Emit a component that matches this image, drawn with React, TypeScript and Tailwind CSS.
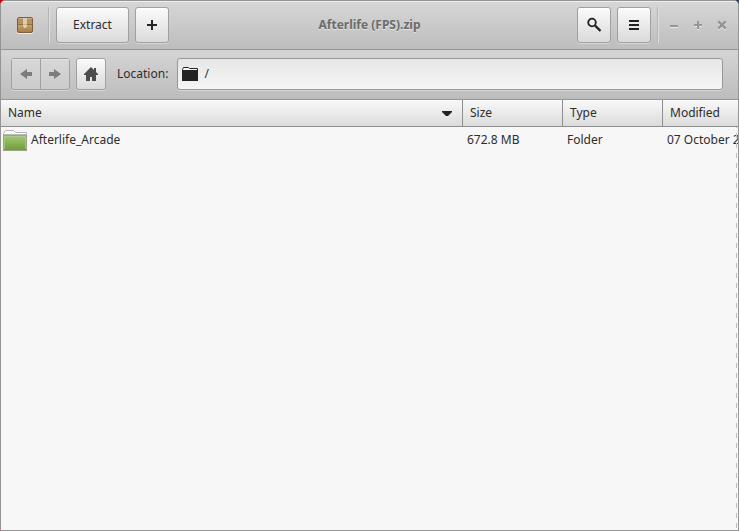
import type { ReactNode } from "react";

const raised =
  "flex shrink-0 items-center justify-center rounded-[3px] border border-[#a0a0a0] bg-linear-to-b from-[#fbfbfb] to-[#dadada] text-[#2d2d2d] shadow-[inset_0_1px_0_#ffffff,0_1px_0_#d6d6d6]";

function WindowButton({ label, children }: { label: string; children: ReactNode }) {
  return (
    <button type="button" aria-label={label} className="flex h-6 w-6 items-center justify-center">
      <svg width="12" height="12" viewBox="0 0 12 12" fill="none" strokeWidth="2">
        <g stroke="#e9e9e9" transform="translate(0 1)">{children}</g>
        <g stroke="#969696">{children}</g>
      </svg>
    </button>
  );
}

function Divider() {
  return <div className="h-9 w-0.5 border-l border-r border-l-[#b5b5b5] border-r-[#e0e0e0]" />;
}

function PackageIcon() {
  return (
    <svg className="ml-3" width="16" height="17" viewBox="0 0 16 17">
      <defs>
        <linearGradient id="box" x1="0" y1="0" x2="0" y2="1">
          <stop offset="0" stopColor="#b58f60" />
          <stop offset="0.42" stopColor="#b8915f" />
          <stop offset="0.5" stopColor="#c8a06c" />
          <stop offset="1" stopColor="#a57a48" />
        </linearGradient>
      </defs>
      <rect x="0" y="1" width="16" height="16" rx="2" fill="#ececec" />
      <rect x="0.5" y="0.5" width="15" height="15" rx="1.5" fill="url(#box)" stroke="#80603c" />
      <path d="M1 7.5h14" stroke="#93703f" />
      <path d="M1.5 1.5h13" stroke="#cdb08a" />
      <path d="M6 1h4v9H9v1H7v-1H6z" fill="#e0cba8" />
      <path d="M6 7.5h4" stroke="#cdb288" />
    </svg>
  );
}

function FolderIcon() {
  return (
    <svg className="shrink-0" width="24" height="21" viewBox="0 0 24 21">
      <defs>
        <linearGradient id="folder" x1="0" y1="0" x2="0" y2="1">
          <stop offset="0" stopColor="#a5c878" />
          <stop offset="1" stopColor="#6f9c36" />
        </linearGradient>
      </defs>
      <path d="M0.5 20V3.5L2.5 0.5h8l2 2h11V20z" fill="#fff" stroke="#b3b3b3" />
      <rect x="0.5" y="5.5" width="23" height="15" fill="url(#folder)" stroke="#9aa38e" />
      <path d="M1 4.5h22" stroke="#b8b8b8" />
      <path d="M1.5 19V6.5h21V19" fill="none" stroke="#b4d28e" strokeOpacity="0.6" />
    </svg>
  );
}

const head =
  "h-[27px] border-b border-b-[#8e8e8e] pl-[7px] text-left align-middle font-normal whitespace-nowrap";

const cell = "pt-[5px] pl-1 align-top whitespace-nowrap";

export default function App() {
  return (
    <div className="bg-linear-to-r from-[#d40000] to-[#33415e] font-['Noto_Sans',sans-serif] text-xs leading-4 text-[#2d2d2d]">
      <main className="flex min-h-screen flex-col overflow-hidden rounded-t-[5px] border border-[#959595] bg-[#f7f7f7]">
        <header className="flex h-[49px] shrink-0 items-center border-b border-[#959595] bg-linear-to-b from-[#d7d7d7] to-[#bdbdbd] px-1 shadow-[inset_0_1px_0_#ededed]">
          <div className="flex flex-1 items-center">
            <PackageIcon />
            <div className="mr-1.5 ml-[15px]">
              <Divider />
            </div>
            <button type="button" className={`${raised} mr-1.5 h-9 w-[73px]`}>
              Extract
            </button>
            <button type="button" aria-label="Add files" className={`${raised} h-9 w-[34px]`}>
              <svg width="10" height="10" viewBox="0 0 10 10">
                <path d="M0 5h10M5 0v10" stroke="#222" strokeWidth="2" />
              </svg>
            </button>
          </div>
          <h1 className="font-bold text-[#6b6b6b] [text-shadow:0_1px_#e4e4e4]">Afterlife (FPS).zip</h1>
          <div className="flex flex-1 items-center justify-end">
            <button type="button" aria-label="Search" className={`${raised} mr-1.5 h-9 w-[34px]`}>
              <svg width="16" height="16" viewBox="0 0 16 16" fill="none" stroke="#222">
                <circle cx="6" cy="5.5" r="3.8" strokeWidth="1.8" />
                <path d="M9 8.5l5.5 5.5" strokeWidth="2.4" />
              </svg>
            </button>
            <button type="button" aria-label="Menu" className={`${raised} mr-1.5 h-9 w-[34px]`}>
              <svg width="10" height="10" viewBox="0 0 10 10">
                <path d="M0 1h10M0 5h10M0 9h10" stroke="#222" strokeWidth="2" />
              </svg>
            </button>
            <Divider />
            <div className="ml-[3px] flex">
              <WindowButton label="Minimize">
                <path d="M2 7h8" />
              </WindowButton>
              <WindowButton label="Maximize">
                <path d="M2 6h8M6 2v8" />
              </WindowButton>
              <WindowButton label="Close">
                <path d="M2.3 2.3l7.4 7.4M9.7 2.3l-7.4 7.4" strokeWidth="2.6" />
              </WindowButton>
            </div>
          </div>
        </header>

        <nav className="flex h-[50px] shrink-0 items-start border-b border-[#959595] bg-linear-to-b from-[#d5d5d5] to-[#bcbcbc] pt-2 pr-[15px] pl-2.5">
          <div className="flex h-8 rounded-[3px] border border-[#a0a0a0] bg-linear-to-b from-[#d8d8d8] to-[#cbcbcb] shadow-[0_1px_0_#d6d6d6]">
            <button type="button" disabled aria-label="Back" className="flex w-7 items-center justify-center shadow-[inset_0_1px_0_#e0e0e0]">
              <svg width="12" height="10" viewBox="0 0 12 10" fill="#7d7d7d">
                <path d="M0 5l7-5v3h5v4H7v3z" />
              </svg>
            </button>
            <button type="button" disabled aria-label="Forward" className="flex w-[29px] items-center justify-center border-l border-[#a0a0a0] shadow-[inset_0_1px_0_#e0e0e0]">
              <svg width="12" height="10" viewBox="0 0 12 10" fill="#7d7d7d">
                <path d="M12 5L5 0v3H0v4h5v3z" />
              </svg>
            </button>
          </div>
          <button type="button" aria-label="Home" className={`${raised} ml-1.5 h-8 w-[30px]`}>
            <svg width="14" height="14" viewBox="0 0 14 14" fill="#4c4c4c">
              <path d="M7 0l3 3V1h2v4l2 2v1h-2v6H8v-4H6v4H2V8H0V7z" />
            </svg>
          </button>
          <label htmlFor="location" className="mr-[9px] ml-[11px] leading-8 whitespace-nowrap">
            Location:
          </label>
          <div className="flex h-8 min-w-0 flex-1 items-center gap-1.5 rounded-[3px] border border-[#989898] bg-linear-to-b from-[#e6e6e6] to-[#f6f6f6] px-1 shadow-[0_1px_0_#d6d6d6]">
            <svg className="shrink-0" width="16" height="14" viewBox="0 0 16 14">
              <path d="M0.5 13V2.5l1-2h5l1 1h8V13z" fill="#fafafa" stroke="#222" />
              <rect x="0" y="3" width="16" height="11" rx="0.5" fill="#222" />
            </svg>
            <input id="location" type="text" defaultValue="/" className="min-w-0 flex-1 bg-transparent outline-none" />
          </div>
        </nav>

        <section className="relative flex-1">
          <table className="w-full table-fixed border-separate border-spacing-0">
            <colgroup>
              <col />
              <col className="w-[100px]" />
              <col className="w-[100px]" />
              <col className="w-[75px]" />
            </colgroup>
            <thead className="bg-linear-to-b from-[#f9f9f9] to-[#dadada]">
              <tr>
                <th aria-sort="ascending" className={`${head} border-r border-r-[#8e8e8e]`}>
                  <div className="flex items-center justify-between pr-2.5">
                    Name
                    <svg width="10" height="6" viewBox="0 0 10 6">
                      <path d="M0 1h10v1L6 6H4L0 2z" fill="#222" />
                    </svg>
                  </div>
                </th>
                <th className={`${head} border-r border-r-[#8e8e8e]`}>Size</th>
                <th className={`${head} border-r border-r-[#8e8e8e]`}>Type</th>
                <th className={head}>Modified</th>
              </tr>
            </thead>
            <tbody>
              <tr className="h-[27px]">
                <td className="pt-[3px] pl-0.5 align-top">
                  <div className="flex items-start gap-1">
                    <FolderIcon />
                    <span className="pt-0.5">Afterlife_Arcade</span>
                  </div>
                </td>
                <td className={cell}>672.8 MB</td>
                <td className={cell}>Folder</td>
                <td className={cell}>07 October 2</td>
              </tr>
            </tbody>
          </table>
          <div className="absolute top-[27px] right-px bottom-0 w-px bg-[repeating-linear-gradient(to_bottom,#bebebe_0_1px,transparent_1px_6px,#bebebe_6px_10px)]" />
        </section>
      </main>
    </div>
  );
}
